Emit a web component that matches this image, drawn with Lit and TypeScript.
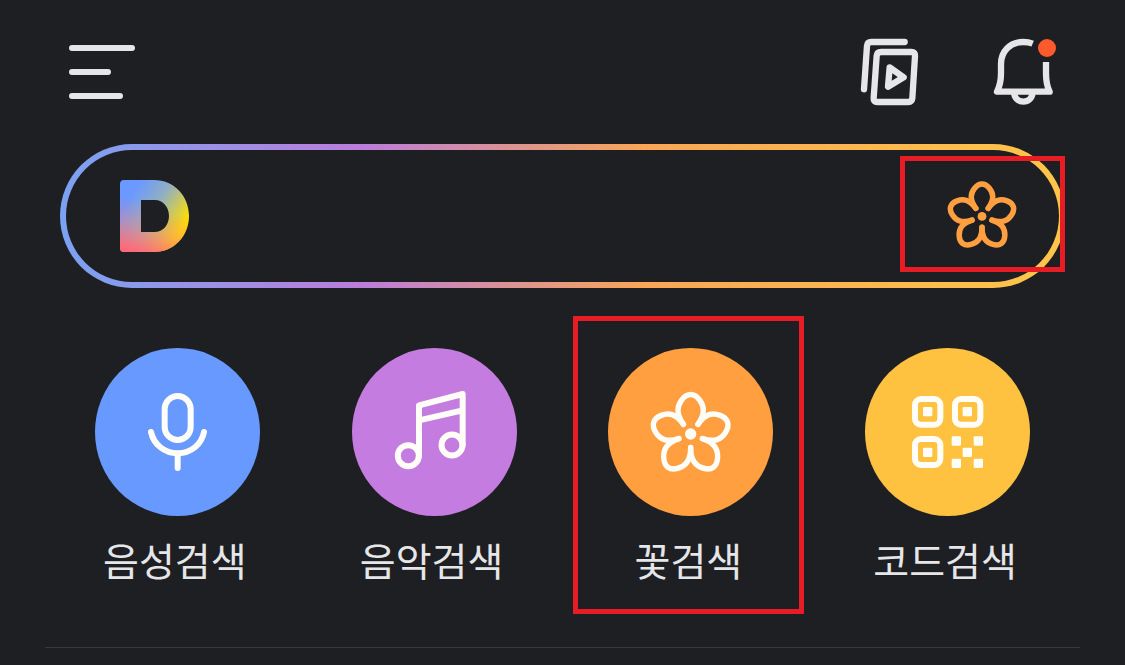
import { LitElement, html, css, svg, nothing } from "lit";
import { customElement } from "lit/decorators.js";
import { classMap } from "lit/directives/class-map.js";

const PETAL =
  "M7.4 -10.2C10.5 -14.5 12.9 -18 12.9 -24C12.9 -31 6.5 -39.5 0 -39.5C-6.5 -39.5 -12.9 -31 -12.9 -24C-12.9 -18 -10.5 -14.5 -7.4 -10.2";

const petals = () =>
  [0, 72, 144, 216, 288].map((a) => svg`<path d=${PETAL} transform="rotate(${a})" />`);

const micIcon = svg`
  <rect x="209" y="144" width="78" height="132" rx="39" />
  <path d="M168 252C176 289 208 316 248 316S320 289 327 252M248 316V360" />`;

const musicIcon = svg`
  <circle cx="169" cy="323" r="31.5" />
  <circle cx="300" cy="291" r="31.5" />
  <path d="M201 323V172L332 138V291M201 217L332 187" />`;

const flowerIcon = svg`
  <g transform="translate(248 260) scale(2.95 3.05)" stroke-width="5.5">${petals()}</g>
  <circle class="solid" cx="248" cy="258" r="17" />`;

const codeIcon = svg`
  <rect x="150" y="153" width="76" height="77" rx="18" />
  <rect x="270" y="153" width="76" height="77" rx="18" />
  <rect x="150" y="273" width="76" height="78" rx="18" />
  ${[
    [174, 177], [293, 177], [174, 299],
    [260, 265], [326, 265], [293, 299], [260, 332], [326, 332],
  ].map(([x, y]) => svg`<rect class="solid" x=${x} y=${y} width="28" height="28" rx="4" />`)}`;

const shortcuts = [
  { label: "음성검색", tone: "blue", icon: micIcon, marked: false },
  { label: "음악검색", tone: "purple", icon: musicIcon, marked: false },
  { label: "꽃검색", tone: "orange", icon: flowerIcon, marked: true },
  { label: "코드검색", tone: "yellow", icon: codeIcon, marked: false },
];

@customElement("app-root")
export class AppRoot extends LitElement {
  static styles = css`
    :host {
      display: block;
      box-sizing: border-box;
      min-height: 100vh;
      background: #1e1f23;
      color: #e6e6e8;
      font-family: "Noto Sans CJK KR", sans-serif;
    }
    svg {
      display: block;
      fill: none;
      stroke: currentColor;
      stroke-width: 18px;
      stroke-linecap: round;
      stroke-linejoin: round;
    }
    button {
      margin: 0;
      padding: 0;
      border: 0;
      background: none;
      color: inherit;
      font: inherit;
      cursor: pointer;
    }
    .solid {
      fill: currentColor;
      stroke: none;
    }
    .top {
      display: flex;
      align-items: center;
      justify-content: space-between;
      padding: 39px 69px 39px;
    }
    .actions {
      display: flex;
      gap: 76px;
    }
    .actions svg {
      stroke-width: 19px;
      overflow: visible;
    }
    .search {
      position: relative;
      display: flex;
      align-items: center;
      gap: 24px;
      box-sizing: border-box;
      height: 144px;
      margin: 0 60px;
      padding: 0 42px 0 54px;
      border: 6px solid transparent;
      border-radius: 72px;
      background:
        linear-gradient(#1e1f23, #1e1f23) padding-box,
        linear-gradient(90deg, #7ba2f2 0%, #bb7ddb 30%, #f9a655 58%, #ffc64a 100%) border-box;
    }
    .query {
      flex: 1;
      min-width: 0;
      height: 80px;
      padding: 0;
      border: 0;
      outline: 0;
      background: none;
      color: inherit;
      font: inherit;
      font-size: 39px;
    }
    .flower {
      color: #ff9f40;
    }
    .mark {
      position: absolute;
      box-sizing: border-box;
      border: 5px solid #e81c24;
      pointer-events: none;
    }
    .search .mark {
      top: 6px;
      right: -6px;
      bottom: 10px;
      width: 165px;
    }
    .shortcuts {
      display: grid;
      grid-template-columns: repeat(4, 1fr);
      margin: 60px 49px 0;
    }
    .shortcut {
      position: relative;
      display: flex;
      flex-direction: column;
      align-items: center;
      gap: 15px;
    }
    .shortcut .mark {
      inset: -32px 15px -27px 10px;
    }
    .disc {
      width: 165px;
      height: 168px;
      border-radius: 50%;
      color: #fffdf8;
    }
    .blue { background: #6899ff; }
    .purple { background: #c47ce0; }
    .orange { background: #ff9f40; }
    .yellow { background: #ffc240; }
    .label {
      padding-right: 5px;
      font-size: 39px;
      line-height: 56px;
      white-space: nowrap;
    }
    .rule {
      height: 1px;
      margin: 60px 45px 0;
      border: 0;
      background: #38393c;
    }
  `;

  render() {
    return html`
      <header class="top">
        <button aria-label="메뉴">
          <svg width="66" height="54" viewBox="0 0 198 162">
            <path d="M9 9H189M9 81H117M9 153H153" />
          </svg>
        </button>
        <div class="actions">
          <button aria-label="동영상">
            <svg width="57" height="66" viewBox="33 27 171 198">
              <path d="M164 36H64Q52 36 51 47L42 178" />
              <path d="M93 66H184Q196 66 195 78L187 205Q186 216 175 216H82Q70 216 71 204L80 77Q81 66 93 66Z" />
              <path d="M119 112L161 142L114 170Z" />
            </svg>
          </button>
          <button aria-label="알림">
            <svg width="62" height="66" viewBox="432 27 186 198">
              <path stroke-linecap="butt" d="M548 41Q536 36 520 36C480 36 453 64 453 102V130C453 155 449 170 441 185H599C591 170 588 155 588 130V96" />
              <path d="M492 188C494 205 505 215 520 215S546 205 548 188" />
              <circle cx="591" cy="54" r="27" fill="#ff5a2c" stroke="none" />
            </svg>
          </button>
        </div>
      </header>

      <form class="search" role="search" @submit=${(e: Event) => e.preventDefault()}>
        <svg width="69" height="72" viewBox="0 0 69 72" aria-hidden="true">
          <defs>
            <linearGradient id="base" gradientUnits="userSpaceOnUse" x1="16" y1="8" x2="66" y2="42">
              <stop offset="0" stop-color="#6b99ff" />
              <stop offset="0.45" stop-color="#93b0c0" />
              <stop offset="1" stop-color="#ffe100" />
            </linearGradient>
            <linearGradient id="warm" gradientUnits="userSpaceOnUse" x1="16" y1="72" x2="30" y2="24">
              <stop offset="0" stop-color="#ff6878" />
              <stop offset="0.5" stop-color="#ff7880" stop-opacity="0.4" />
              <stop offset="1" stop-color="#ff7880" stop-opacity="0" />
            </linearGradient>
          </defs>
          ${["url(#base)", "url(#warm)"].map(
            (paint) => svg`<path stroke="none" fill-rule="evenodd" fill=${paint}
              d="M4 0H34C54 0 69 16 69 36S54 72 34 72H4Q0 72 0 68V4Q0 0 4 0ZM21 20V52H35C43 52 49 45 49 36S43 20 35 20Z" />`
          )}
        </svg>
        <input class="query" type="text" aria-label="검색어" />
        <button class="flower" type="button" aria-label="꽃검색">
          <svg width="70" height="70" viewBox="-42 -43 84 84">
            <g stroke-width="6.6">${petals()}</g>
            <circle class="solid" cx="0" cy="-0.5" r="5.3" />
          </svg>
        </button>
        <span class="mark"></span>
      </form>

      <nav class="shortcuts">
        ${shortcuts.map(
          (s) => html`
            <button class="shortcut">
              <span class=${classMap({ disc: true, [s.tone]: true })}>
                <svg viewBox="0 0 495 504" aria-hidden="true">${s.icon}</svg>
              </span>
              <span class="label">${s.label}</span>
              ${s.marked ? html`<span class="mark"></span>` : nothing}
            </button>
          `
        )}
      </nav>
      <hr class="rule" />
    `;
  }
}
